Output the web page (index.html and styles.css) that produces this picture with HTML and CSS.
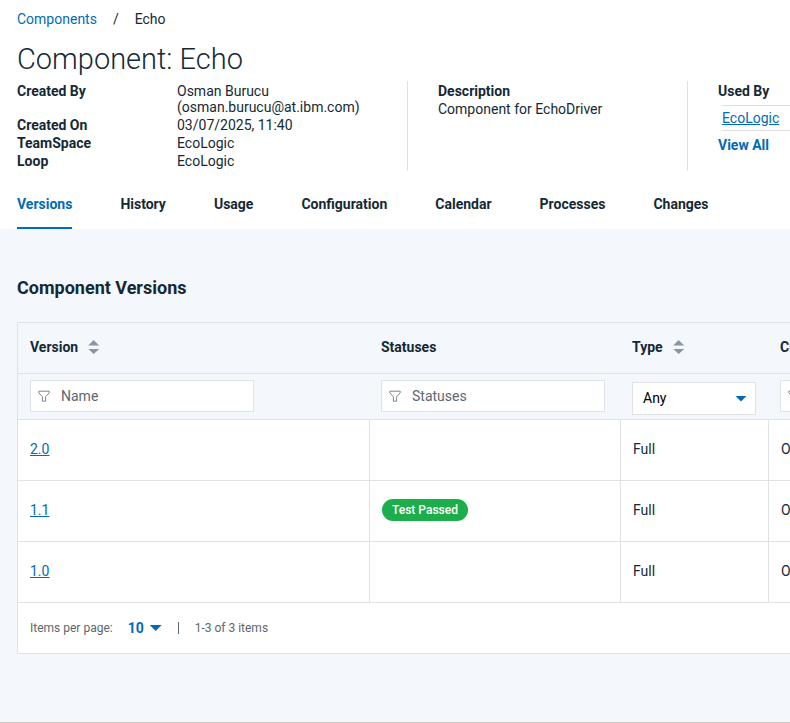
FILE: index.html
```html
<!DOCTYPE html>
<html lang="en">
<head>
    <meta charset="UTF-8">
    <meta name="viewport" content="width=device-width, initial-scale=1.0">
    <title>Component: Echo</title>
    <link rel="stylesheet" href="styles.css">
</head>
<body>
    <header class="page-header">
        <nav class="breadcrumb" aria-label="Breadcrumb">
            <a href="#">Components</a>
            <span>/</span>
            <span>Echo</span>
        </nav>

        <h1>Component: Echo</h1>

        <div class="details">
            <dl class="properties">
                <dt>Created By</dt>
                <dd>Osman Burucu (osman.burucu@at.ibm.com)</dd>
                <dt>Created On</dt>
                <dd>03/07/2025, 11:40</dd>
                <dt>TeamSpace</dt>
                <dd>EcoLogic</dd>
                <dt>Loop</dt>
                <dd>EcoLogic</dd>
            </dl>
            <div class="detail-column">
                <strong>Description</strong>
                <span>Component for EchoDriver</span>
            </div>
            <div class="detail-column">
                <strong>Used By</strong>
                <ul class="used-by">
                    <li><a href="#">EcoLogic</a></li>
                </ul>
                <a class="view-all" href="#">View All</a>
            </div>
        </div>

        <nav class="tabs" aria-label="Component">
            <a class="tab active" href="#">Versions</a>
            <a class="tab" href="#">History</a>
            <a class="tab" href="#">Usage</a>
            <a class="tab" href="#">Configuration</a>
            <a class="tab" href="#">Calendar</a>
            <a class="tab" href="#">Processes</a>
            <a class="tab" href="#">Changes</a>
        </nav>
    </header>

    <main class="content">
        <h2>Component Versions</h2>

        <div class="table-box">
            <table class="versions">
                <colgroup>
                    <col class="col-version">
                    <col class="col-statuses">
                    <col class="col-type">
                    <col>
                </colgroup>
                <thead>
                    <tr class="headings">
                        <th>
                            <button class="sort" type="button">Version
                                <svg width="12" height="14" viewBox="0 0 12 14" aria-hidden="true"><path d="M5.3 .3h.4L11.2 5.5H.3zM.3 9h10.9L6 13.8h-.6z"/></svg>
                            </button>
                        </th>
                        <th>Statuses</th>
                        <th>
                            <button class="sort" type="button">Type
                                <svg width="12" height="14" viewBox="0 0 12 14" aria-hidden="true"><path d="M5.3 .3h.4L11.2 5.5H.3zM.3 9h10.9L6 13.8h-.6z"/></svg>
                            </button>
                        </th>
                        <th>Created By</th>
                    </tr>
                    <tr class="filters">
                        <td>
                            <label class="filter">
                                <svg width="12" height="12" viewBox="0 0 12 12" aria-hidden="true"><path d="M.8 1.2h10.4v1.6L7.6 6.8v4.4H4.4V6.8L.8 2.8z"/></svg>
                                <input type="text" placeholder="Name" aria-label="Filter by name">
                            </label>
                        </td>
                        <td>
                            <label class="filter">
                                <svg width="12" height="12" viewBox="0 0 12 12" aria-hidden="true"><path d="M.8 1.2h10.4v1.6L7.6 6.8v4.4H4.4V6.8L.8 2.8z"/></svg>
                                <input type="text" placeholder="Statuses" aria-label="Filter by status">
                            </label>
                        </td>
                        <td class="type-filter">
                            <div class="dropdown">
                                <select aria-label="Filter by type">
                                    <option>Any</option>
                                </select>
                            </div>
                        </td>
                        <td>
                            <label class="filter">
                                <svg width="12" height="12" viewBox="0 0 12 12" aria-hidden="true"><path d="M.8 1.2h10.4v1.6L7.6 6.8v4.4H4.4V6.8L.8 2.8z"/></svg>
                                <input type="text" aria-label="Filter by creator">
                            </label>
                        </td>
                    </tr>
                </thead>
                <tbody>
                    <tr>
                        <td><a href="#">2.0</a></td>
                        <td></td>
                        <td>Full</td>
                        <td>Osman Burucu</td>
                    </tr>
                    <tr>
                        <td><a href="#">1.1</a></td>
                        <td><span class="status">Test Passed</span></td>
                        <td>Full</td>
                        <td>Osman Burucu</td>
                    </tr>
                    <tr>
                        <td><a href="#">1.0</a></td>
                        <td></td>
                        <td>Full</td>
                        <td>Osman Burucu</td>
                    </tr>
                </tbody>
            </table>

            <div class="pagination">
                <label for="pageSize">Items per page:</label>
                <div class="dropdown page-size">
                    <select id="pageSize">
                        <option>10</option>
                    </select>
                </div>
                <span class="separator"></span>
                <span>1-3 of 3 items</span>
            </div>
        </div>
    </main>
</body>
</html>
```
FILE: styles.css
```css
:root {
    --text-color: #152935;
    --muted-color: #5a6872;
    --link-color: #006bb6;
    --line-color: #dfe3e6;
    --background-color: #f4f7fb;
}

* {
    box-sizing: border-box;
}

body {
    font-family: Roboto, "Liberation Sans", sans-serif;
    font-size: 14px;
    line-height: 16px;
    color: var(--text-color);
    background-color: var(--background-color);
    margin: 0;
    display: flex;
    flex-direction: column;
    min-height: 100vh;
}

a {
    color: var(--link-color);
}

h1, h2, dl, dd, ul {
    margin: 0;
    padding: 0;
}

.page-header {
    background-color: white;
    padding: 11px 0 0 17px;
}

.breadcrumb {
    display: flex;
    gap: 16px;
}

.breadcrumb a {
    text-decoration: none;
}

h1 {
    font-size: 29px;
    font-weight: 300;
    line-height: 40px;
    margin: 12px 0 2px;
}

.details {
    display: grid;
    grid-template-columns: 390px 280px 1fr;
}

.properties {
    display: grid;
    grid-template-columns: 160px 1fr;
    row-gap: 2px;
    padding: 2px 30px 2px 0;
}

dt, strong {
    font-weight: 700;
}

.detail-column {
    display: flex;
    flex-direction: column;
    gap: 2px;
    padding: 2px 0 2px 30px;
    border-left: 1px solid #e0e0e0;
}

.used-by {
    list-style: none;
    margin: 4px 0 4px 4px;
    border-top: 1px solid #e0e0e0;
    border-bottom: 1px solid #e0e0e0;
    padding: 4px 0;
}

.view-all {
    font-weight: 700;
    text-decoration: none;
}

.tabs {
    display: flex;
    gap: 48px;
    margin-top: 25px;
}

.tab {
    padding-bottom: 15px;
    border-bottom: 2px solid transparent;
    color: var(--text-color);
    font-weight: 700;
    text-decoration: none;
}

.tab.active {
    color: var(--link-color);
    border-bottom-color: var(--link-color);
}

.content {
    flex-grow: 1;
    padding: 48px 0 68px 17px;
    border-bottom: 1px solid #c8c8c8;
    overflow-x: hidden;
}

h2 {
    font-size: 18px;
    line-height: 22px;
    margin-bottom: 23px;
}

.table-box {
    min-width: 1100px;
    background-color: white;
    border: 1px solid var(--line-color);
}

.versions {
    width: 100%;
    table-layout: fixed;
    border-collapse: separate;
    border-spacing: 0;
}

.col-version {
    width: 351px;
}

.col-statuses {
    width: 251px;
}

.col-type {
    width: 148px;
}

.versions th,
.versions td {
    padding: 0 12px 2px;
    text-align: left;
    border-bottom: 1px solid var(--line-color);
}

.versions thead {
    background-color: var(--background-color);
}

.headings th {
    height: 51px;
}

.sort {
    display: flex;
    align-items: center;
    gap: 10px;
    padding: 0;
    border: none;
    background: none;
    font: inherit;
    color: inherit;
    cursor: pointer;
}

.sort svg {
    fill: #8897a2;
}

.versions .filters td {
    height: 46px;
    padding-top: 6px;
    vertical-align: top;
}

.versions .filters .type-filter {
    padding-top: 8px;
}

.filter {
    display: flex;
    align-items: center;
    gap: 11px;
    width: 224px;
    height: 32px;
    padding: 0 7px 1px;
    background-color: white;
    border: 1px solid var(--line-color);
}

.filter svg {
    flex-shrink: 0;
    fill: none;
    stroke: var(--muted-color);
    stroke-width: .8;
}

.filter input {
    width: 100%;
    padding: 0;
    border: none;
    outline: none;
    background: none;
    font: inherit;
    color: var(--text-color);
}

.filter input::placeholder {
    color: var(--muted-color);
}

/* native arrow is hidden, the triangle shares the select's grid cell */
.dropdown {
    display: grid;
    align-items: center;
}

.dropdown::after {
    content: '';
    grid-area: 1 / 1;
    justify-self: end;
    width: 12px;
    height: 6px;
    margin-right: 9px;
    background-color: var(--link-color);
    clip-path: polygon(0 0, 100% 0, 50% 100%);
    pointer-events: none;
}

.dropdown select {
    grid-area: 1 / 1;
    appearance: none;
    height: 33px;
    padding: 0 10px 1px;
    border: 1px solid var(--line-color);
    border-radius: 0;
    background-color: white;
    font: inherit;
    color: black;
}

.versions tbody td {
    height: 61px;
}

.versions tbody td + td {
    border-left: 1px solid var(--line-color);
}

.status {
    display: inline-block;
    padding: 3px 10px;
    border-radius: 11px;
    background-color: #1bae4b;
    color: white;
    font-size: 12px;
    font-weight: 500;
}

.pagination {
    display: flex;
    align-items: center;
    height: 50px;
    padding: 0 12px;
    font-size: 12px;
    color: var(--muted-color);
}

.page-size {
    width: 34px;
    margin-left: 15px;
}

.page-size::after {
    margin-right: 0;
}

.page-size select {
    padding: 0 0 1px;
    border: none;
    color: var(--link-color);
    font-size: 14px;
    font-weight: 700;
}

.separator {
    width: 1px;
    height: 12px;
    margin: 0 16px;
    background-color: var(--muted-color);
}
```
